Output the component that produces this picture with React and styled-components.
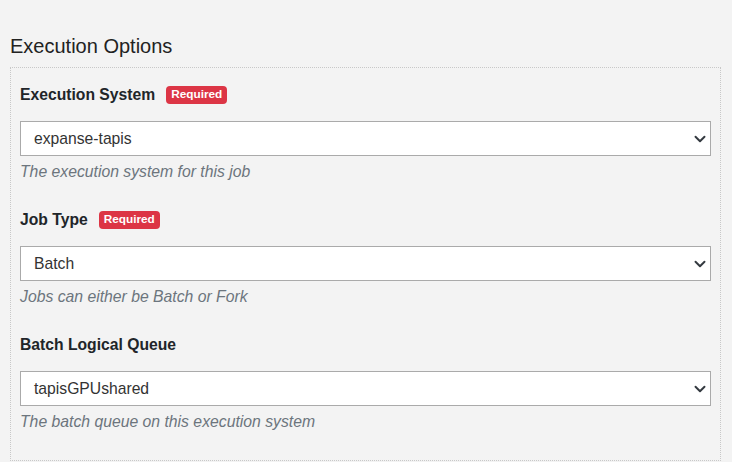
import React from "react";
import styled, { createGlobalStyle } from "styled-components";

const GlobalStyle = createGlobalStyle`
  html, body {
    margin: 0;
    padding: 0;
    background: #f3f3f3;
  }
  body {
    font-family: "Liberation Sans", Arial, sans-serif;
    color: #212529;
  }
`;

const Page = styled.div`
  width: 732px;
  height: 462px;
  overflow: hidden;
  padding: 34px 11px 0 10px;
  box-sizing: border-box;
`;

const SectionTitle = styled.h2`
  margin: 0 0 9px 0;
  font-size: 20px;
  font-weight: 400;
  line-height: 24px;
  color: #222222;
`;

const Fieldset = styled.div`
  border: 1px dotted #c8c8c8;
  padding: 17px 9px 29px 9px;
  display: flex;
  flex-direction: column;
  gap: 29px;
`;

const Field = styled.div`
  display: flex;
  flex-direction: column;
`;

const LabelRow = styled.div`
  display: flex;
  align-items: center;
  gap: 11px;
  height: 20px;
  margin-bottom: 16px;
`;

const Label = styled.label`
  font-size: 15.7px;
  font-weight: 700;
  color: #212529;
`;

const Badge = styled.span`
  display: inline-block;
  background: #dc3545;
  color: #ffffff;
  font-size: 11.8px;
  font-weight: 700;
  line-height: 1;
  padding: 3px 5px 3px 5px;
  border-radius: 4px;
`;

const SelectBox = styled.div`
  height: 35px;
  box-sizing: border-box;
  border: 1px solid #aaaaaa;
  background: #ffffff;
  display: flex;
  align-items: center;
  padding: 0 13px;
  font-size: 15.7px;
  color: #333333;
`;

const Chevron = styled.svg`
  margin-left: auto;
  width: 12px;
  height: 12px;
  margin-right: -9px;
`;

const Help = styled.small`
  margin-top: 7px;
  font-size: 15.75px;
  font-style: italic;
  color: #6c757d;
  line-height: 18px;
`;

const fields = [
  {
    label: "Execution System",
    required: true,
    value: "expanse-tapis",
    help: "The execution system for this job",
  },
  {
    label: "Job Type",
    required: true,
    value: "Batch",
    help: "Jobs can either be Batch or Fork",
  },
  {
    label: "Batch Logical Queue",
    required: false,
    value: "tapisGPUshared",
    help: "The batch queue on this execution system",
  },
];

const App = () => (
  <>
    <GlobalStyle />
    <Page>
      <SectionTitle>Execution Options</SectionTitle>
      <Fieldset>
        {fields.map((f) => (
          <Field key={f.label}>
            <LabelRow>
              <Label>{f.label}</Label>
              {f.required && <Badge>Required</Badge>}
            </LabelRow>
            <SelectBox>
              {f.value}
              <Chevron viewBox="0 0 16 16">
                <path
                  d="M2 5l6 6 6-6"
                  fill="none"
                  stroke="#343a40"
                  strokeWidth="2.6"
                  strokeLinecap="round"
                  strokeLinejoin="round"
                />
              </Chevron>
            </SelectBox>
            <Help>{f.help}</Help>
          </Field>
        ))}
      </Fieldset>
    </Page>
  </>
);

export default App;
